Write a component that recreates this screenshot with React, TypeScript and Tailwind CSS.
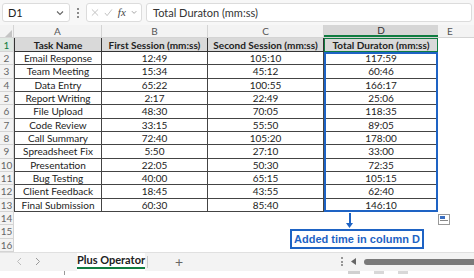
import React from 'react';

const rows: [string, string, string, string][] = [
  ['Email Response', '12:49', '105:10', '117:59'],
  ['Team Meeting', '15:34', '45:12', '60:46'],
  ['Data Entry', '65:22', '100:55', '166:17'],
  ['Report Writing', '2:17', '22:49', '25:06'],
  ['File Upload', '48:30', '70:05', '118:35'],
  ['Code Review', '33:15', '55:50', '89:05'],
  ['Call Summary', '72:40', '105:20', '178:00'],
  ['Spreadsheet Fix', '5:50', '27:10', '33:00'],
  ['Presentation', '22:05', '50:30', '72:35'],
  ['Bug Testing', '40:00', '65:15', '105:15'],
  ['Client Feedback', '18:45', '43:55', '62:40'],
  ['Final Submission', '60:30', '85:40', '146:10'],
];

const cols = 'grid grid-cols-[14px_88px_106px_116px_114px_1fr]';

const App = () => {
  return (
    <div className="w-[474px] h-[278px] overflow-hidden bg-white relative text-[10px] leading-none text-[#222]" style={{ fontFamily: 'Lato, "Noto Sans", sans-serif' }}>
      {/* Formula bar */}
      <div className="h-[25px] bg-[#f7f7f7] flex items-center px-[2px] gap-[4px]">
        <div className="w-[68px] h-[19px] bg-white border border-[#dcdcdc] rounded-[3px] flex items-center justify-between px-[5px]">
          <span className="text-[11px]">D1</span>
          <svg width="8" height="6" viewBox="0 0 8 6"><path d="M1 1.5 L4 4.5 L7 1.5" stroke="#666" fill="none" strokeWidth="1.1" /></svg>
        </div>
        <div className="flex flex-col gap-[2px] px-[3px]">
          <span className="w-[2px] h-[2px] bg-[#666] rounded-full" />
          <span className="w-[2px] h-[2px] bg-[#666] rounded-full" />
          <span className="w-[2px] h-[2px] bg-[#666] rounded-full" />
        </div>
        <div className="w-[56px] h-[19px] bg-white border border-[#dcdcdc] rounded-[3px] flex items-center gap-[5px] px-[4px]">
          <svg width="9" height="9" viewBox="0 0 9 9"><path d="M1 1 L8 8 M8 1 L1 8" stroke="#bbb" strokeWidth="1" /></svg>
          <svg width="10" height="9" viewBox="0 0 10 9"><path d="M1 5 L3.5 8 L9 1" stroke="#bbb" fill="none" strokeWidth="1" /></svg>
          <span className="italic text-[11px] text-[#444]" style={{ fontFamily: '"Liberation Serif", serif' }}>fx</span>
          <svg width="7" height="5" viewBox="0 0 7 5"><path d="M1 1 L3.5 3.5 L6 1" stroke="#999" fill="none" strokeWidth="1" /></svg>
        </div>
        <div className="flex-1 h-[19px] bg-white border border-[#dcdcdc] rounded-[3px] flex items-center px-[6px] text-[11px] text-[#333]">
          Total Duraton (mm:ss)
        </div>
      </div>

      {/* Column letters */}
      <div className={`${cols} h-[13px] bg-[#f3f3f3] text-[#555] text-[10px] border-b border-[#d4d4d4]`}>
        <div className="flex items-end justify-end pr-[1px] border-r border-[#d4d4d4]">
          <svg width="7" height="7" viewBox="0 0 7 7"><path d="M7 0 L7 7 L0 7 Z" fill="#c4c4c4" /></svg>
        </div>
        {['A', 'B', 'C'].map((c) => (
          <div key={c} className="flex items-center justify-center border-r border-[#d4d4d4]">{c}</div>
        ))}
        <div className="flex items-center justify-center bg-[#d6d6d6] border-b-2 border-[#107c41] text-[#333]">D</div>
        <div className="flex items-center justify-center pr-[12px]">E</div>
      </div>

      {/* Header row */}
      <div className={`${cols} h-[14px] text-[10px] whitespace-nowrap`}>
        <div className="flex items-center justify-center bg-[#dfe8e2] text-[#107c41] border-r border-b border-[#d4d4d4]">1</div>
        <div className="flex items-center justify-center bg-[#d9d9d9] font-bold border-r border-b border-[#333] border-l">Task Name</div>
        <div className="flex items-center justify-center bg-[#d9d9d9] font-bold border-r border-b border-[#333]">First Session (mm:ss)</div>
        <div className="flex items-center justify-center bg-[#d9d9d9] font-bold border-r border-b border-[#333]">Second Session (mm:ss)</div>
        <div className="flex items-center justify-center bg-[#d9d9d9] font-bold border border-[#107c41]">Total Duraton (mm:ss)</div>
        <div />
      </div>

      {/* Data rows */}
      <div className="relative">
        {rows.map((r, i) => (
          <div key={i} className={`${cols} h-[13.34px]`}>
            <div className="flex items-center justify-center bg-[#f3f3f3] text-[#666] border-r border-b border-[#d4d4d4]">{i + 2}</div>
            <div className="flex items-center justify-center border-l border-r border-b border-[#444]">{r[0]}</div>
            <div className="flex items-center justify-center border-r border-b border-[#444]">{r[1]}</div>
            <div className="flex items-center justify-center border-r border-b border-[#444]">{r[2]}</div>
            <div className="flex items-center justify-center border-b border-[#444]">{r[3]}</div>
            <div />
          </div>
        ))}
        {/* selection D2:D13 */}
        <div className="absolute left-[324px] top-0 w-[114px] h-[160px] border-2 border-[#1e63c4] pointer-events-none" />
      </div>

      {/* Empty rows */}
      {[14, 15, 16].map((n) => (
        <div key={n} className={`${cols} h-[13.34px]`}>
          <div className="flex items-center justify-center bg-[#f3f3f3] text-[#666] border-r border-b border-[#d4d4d4]">{n}</div>
        </div>
      ))}

      {/* Sheet tabs */}
      <div className="h-[19px] bg-[#f3f3f3] border-t border-[#e0e0e0] flex items-center">
        <div className="w-[77px] flex items-center gap-[13px] pl-[16px]">
          <svg width="6" height="9" viewBox="0 0 6 9"><path d="M5 1 L1.5 4.5 L5 8" stroke="#bbb" fill="none" strokeWidth="1" /></svg>
          <svg width="6" height="9" viewBox="0 0 6 9"><path d="M1 1 L4.5 4.5 L1 8" stroke="#999" fill="none" strokeWidth="1" /></svg>
        </div>
        <div className="h-full w-[68px] bg-white flex flex-col items-center justify-center">
          <span className="font-bold text-[11px] text-[#222] whitespace-nowrap border-b-2 border-[#107c41] pb-[2px]">Plus Operator</span>
        </div>
        <div className="w-[1px] h-[12px] bg-[#ccc] ml-[2px]" />
        <div className="w-[62px] flex justify-center text-[#666] text-[14px]">+</div>
        <div className="flex-1" />
        <div className="flex items-center gap-[8px]">
          <div className="flex flex-col gap-[1.5px]">
            <span className="w-[2px] h-[2px] bg-[#777] rounded-full" />
            <span className="w-[2px] h-[2px] bg-[#777] rounded-full" />
            <span className="w-[2px] h-[2px] bg-[#777] rounded-full" />
          </div>
          <svg width="5" height="7" viewBox="0 0 5 7"><path d="M5 0 L0 3.5 L5 7 Z" fill="#666" /></svg>
          <div className="w-[112px] h-[6px] bg-[#7a7a7a] rounded-l-full -mr-[2px]" />
        </div>
      </div>

      {/* status strip */}
      <div className="h-[8px] bg-white flex items-start">
        <div className="ml-[64px] w-[1px] h-[4px] bg-[#999]" />
        <div className="ml-[283px] w-[12px] h-[3px] bg-[#d0d0d0]" />
        <div className="ml-[14px] w-[10px] h-[3px] bg-[#d8d8d8]" />
        <div className="ml-[14px] w-[10px] h-[3px] bg-[#d8d8d8]" />
      </div>

      {/* autofill options icon */}
      <div className="absolute left-[438px] top-[214px] w-[12px] h-[11px] border border-[#999] bg-white">
        <div className="w-[5px] h-[3px] bg-[#3b6fc1] mt-[1px] ml-[1px]" />
        <div className="w-[8px] h-[1px] bg-[#888] mt-[1px] ml-[1px]" />
      </div>

      {/* arrow */}
      <div className="absolute left-[346px] top-[213px] flex flex-col items-center">
        <div className="w-[2px] h-[11px] bg-[#1e63c4]" />
        <svg width="7" height="5" viewBox="0 0 7 5" className="-mt-[1px]"><path d="M0 0 L7 0 L3.5 5 Z" fill="#1e63c4" /></svg>
      </div>

      {/* callout */}
      <div className="absolute left-[290px] top-[229px] w-[134px] h-[20px] bg-white border-2 border-[#1e63c4] flex items-center justify-center">
        <span className="text-[#1e63c4] font-bold text-[11px]" style={{ fontFamily: '"Liberation Sans", Arial, sans-serif' }}>Added time in column D</span>
      </div>
    </div>
  );
};

export default App;
